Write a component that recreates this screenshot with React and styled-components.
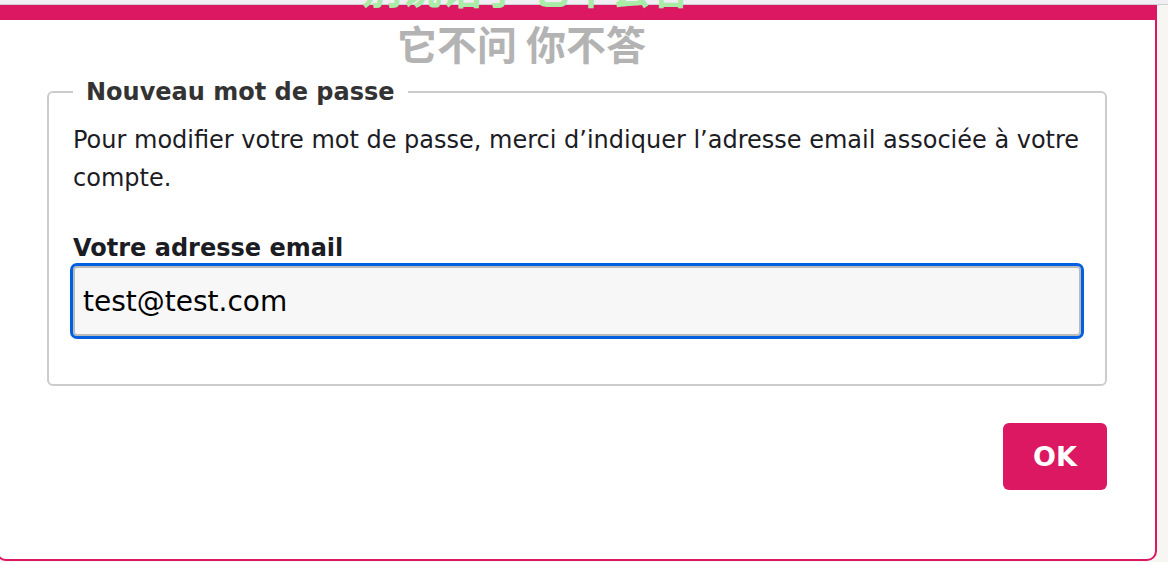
import React from "react";
import styled, { createGlobalStyle } from "styled-components";

const GlobalStyle = createGlobalStyle`
  html, body {
    margin: 0;
    padding: 0;
    background: #f7f6f2;
  }
  body {
    font-family: "DejaVu Sans", Verdana, sans-serif;
    color: #1c1c24;
  }
`;

const PINK = "#dc1862";

const Page = styled.div`
  position: relative;
  height: 562px;
  overflow: hidden;
`;

const TopStrip = styled.div`
  height: 4px;
  background: #f0f0f4;
  border-bottom: 1px solid #cfcfd4;
`;

const Modal = styled.div`
  box-sizing: border-box;
  margin-left: -4px;
  width: 1161px;
  height: 556px;
  background: #fff;
  border: 2px solid ${PINK};
  border-top-width: 15px;
  border-radius: 0 0 10px 10px;
  padding: 58px 48px 0 49px;
`;

const Fieldset = styled.fieldset`
  margin: 0;
  padding: 15px 24px 48px 24px;
  border: 2px solid #cccccc;
  border-radius: 6px;
`;

const Legend = styled.legend`
  padding: 0 13px;
  font-size: 24px;
  font-weight: bold;
  color: #333;
`;

const Intro = styled.p`
  margin: 0 0 36px;
  font-size: 24px;
  line-height: 38px;
`;

const Label = styled.label`
  display: block;
  font-size: 24px;
  font-weight: bold;
  line-height: 30px;
  margin-bottom: 3px;
`;

const Input = styled.input`
  box-sizing: border-box;
  display: block;
  width: 100%;
  height: 70px;
  padding: 0 8px;
  font-family: "DejaVu Sans", Verdana, sans-serif;
  font-size: 28px;
  color: #000;
  background: #f7f7f7;
  border: 2px solid #bbbbbb;
  border-radius: 4px;
  outline: 3px solid #0060df;
  caret-color: #000;
`;

const Actions = styled.div`
  display: flex;
  justify-content: flex-end;
  margin-top: 37px;
`;

const OkButton = styled.button`
  width: 104px;
  height: 67px;
  border: none;
  border-radius: 6px;
  background: ${PINK};
  color: #fff;
  font-family: "DejaVu Sans", Verdana, sans-serif;
  font-size: 27px;
  font-weight: bold;
  cursor: pointer;
`;

const Marquee = styled.div`
  position: absolute;
  left: ${(p) => p.left}px;
  top: ${(p) => p.top}px;
  font-family: "Noto Sans CJK SC", sans-serif;
  font-size: 40px;
  font-weight: bold;
  line-height: 1;
  white-space: nowrap;
  color: ${(p) => p.color};
  pointer-events: none;
`;

export default function App() {
  return (
    <Page>
      <GlobalStyle />
      <TopStrip />
      <Modal>
        <Fieldset>
          <Legend>Nouveau mot de passe</Legend>
          <Intro>
            Pour modifier votre mot de passe, merci d’indiquer l’adresse email
            associée à votre compte.
          </Intro>
          <Label htmlFor="email">Votre adresse email</Label>
          <Input
            id="email"
            type="email"
            defaultValue="test@test.com"
            autoFocus
          />
        </Fieldset>
        <Actions>
          <OkButton type="button">OK</OkButton>
        </Actions>
      </Modal>
      <Marquee left={362} top={-33} color="#a8eca8">
        别说话了 它不会答
      </Marquee>
      <Marquee left={397} top={23} color="#b3b3b3">
        它不问 你不答
      </Marquee>
    </Page>
  );
}
